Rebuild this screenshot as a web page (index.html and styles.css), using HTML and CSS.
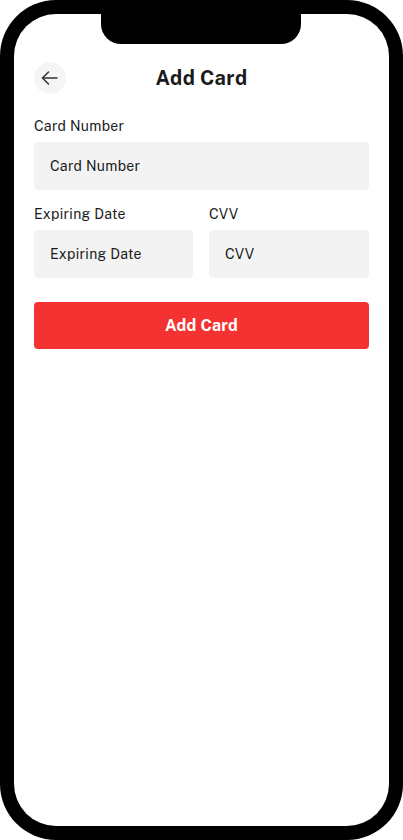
FILE: index.html
```html
<!DOCTYPE html>
<html>
<head>
<meta charset="utf-8">
<link rel="stylesheet" href="styles.css">
</head>
<body>
<div class="phone">
  <div class="screen">
    <div class="notch"></div>
    <div class="content">
      <div class="header">
        <button class="back" aria-label="Back">
          <svg width="20" height="20" viewBox="0 0 20 20" fill="none" stroke="#333" stroke-width="1.5" stroke-linecap="round" stroke-linejoin="round">
            <path d="M17 10H2.5"/>
            <path d="M8.5 4L2.5 10L8.5 16"/>
          </svg>
        </button>
        <h1 class="title">Add Card</h1>
        <span class="spacer"></span>
      </div>
      <div class="field">
        <label class="label">Card Number</label>
        <div class="input">Card Number</div>
      </div>
      <div class="row">
        <div class="field">
          <label class="label">Expiring Date</label>
          <div class="input">Expiring Date</div>
        </div>
        <div class="field">
          <label class="label">CVV</label>
          <div class="input">CVV</div>
        </div>
      </div>
      <button class="submit">Add Card</button>
    </div>
  </div>
</div>
</body>
</html>
```

FILE: styles.css
```css
* { box-sizing: border-box; }
html, body { margin: 0; padding: 0; background: #fff; }
body { font-family: "Public Sans", Inter, "Liberation Sans", sans-serif; color: #1a1a1a; }
.phone {
  width: 403px;
  height: 840px;
  background: #000;
  border-radius: 56px;
  padding: 14px;
}
.screen {
  position: relative;
  height: 812px;
  background: #fff;
  border-radius: 42px;
  overflow: hidden;
}
.notch {
  position: absolute;
  top: 0;
  left: 87px;
  width: 200px;
  height: 30px;
  background: #000;
  border-radius: 0 0 20px 20px;
}
.content {
  padding: 48px 20px 0;
}
.header {
  display: grid;
  grid-template-columns: 32px 1fr 32px;
  align-items: center;
  height: 32px;
}
.back {
  width: 32px;
  height: 32px;
  border-radius: 50%;
  border: none;
  background: #f5f5f5;
  padding: 0;
  display: flex;
  align-items: center;
  justify-content: center;
}
.title {
  margin: 0;
  text-align: center;
  font-size: 20px;
  font-weight: 700;
  line-height: 32px;
  letter-spacing: 0.4px;
  color: #1a1a1a;
}
.field {
  display: flex;
  flex-direction: column;
  gap: 6px;
  margin-top: 22px;
}
.label {
  font-size: 14px;
  line-height: 20px;
  letter-spacing: 0.3px;
  color: #1a1a1a;
}
.input {
  height: 48px;
  background: #f3f3f3;
  border-radius: 4px;
  padding: 0 16px;
  display: flex;
  align-items: center;
  font-size: 14px;
  letter-spacing: 0.3px;
  color: #1a1a1a;
}
.row {
  display: grid;
  grid-template-columns: 159px 1fr;
  gap: 16px;
}
.row .field { margin-top: 14px; }
.submit {
  display: block;
  width: 100%;
  height: 47px;
  margin-top: 24px;
  border: none;
  border-radius: 4px;
  background: #f53232;
  color: #fff;
  font-family: inherit;
  font-size: 16px;
  font-weight: 700;
  letter-spacing: 0.25px;
}
```
